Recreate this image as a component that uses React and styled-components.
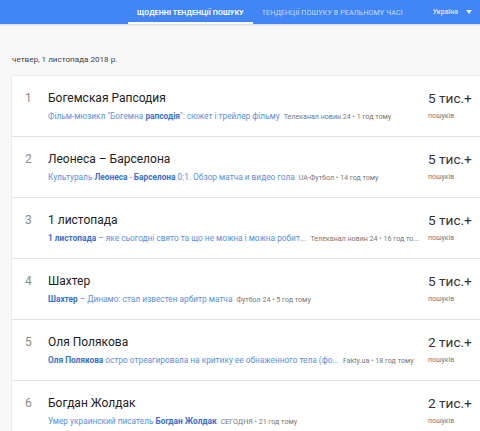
import React from 'react'
import styled, { createGlobalStyle } from 'styled-components'

const Global = createGlobalStyle`
  html, body { margin: 0; padding: 0; background: #f8f8f8; }
  body { font-family: Roboto, "Noto Sans", "Liberation Sans", sans-serif; overflow: hidden; }
`

const Header = styled.header`
  height: 24px;
  background: #4285f4;
  display: flex;
  align-items: stretch;
  justify-content: flex-end;
  padding-right: 8px;
  box-shadow: 0 1px 2px rgba(0, 0, 0, 0.15);
`

const Tab = styled.div`
  display: flex;
  align-items: center;
  padding: 0 9px;
  font-size: 7.1px;
  letter-spacing: 0.1px;
  text-transform: uppercase;
  color: ${p => (p.active ? '#fff' : 'rgba(255,255,255,0.72)')};
  font-weight: ${p => (p.active ? 700 : 400)};
  border-bottom: 2px solid ${p => (p.active ? '#fff' : 'transparent')};
  box-sizing: border-box;
  padding-top: 2px;
`

const Country = styled.div`
  display: flex;
  align-items: center;
  gap: 8px;
  margin-left: 21px;
  font-size: 7px;
  color: rgba(255, 255, 255, 0.85);
  font-weight: 500;
`

const Caret = styled.span`
  width: 0;
  height: 0;
  border-left: 3px solid transparent;
  border-right: 3px solid transparent;
  border-top: 4px solid rgba(255, 255, 255, 0.85);
`

const Main = styled.main`
  padding: 30px 0 0 12px;
`

const DateLine = styled.div`
  font-size: 8.1px;
  color: #444;
  height: 10px;
  line-height: 10px;
  margin-bottom: 12px;
`

const Card = styled.section`
  background: #fff;
  box-shadow: 0 0 2px rgba(0, 0, 0, 0.12), 0 1px 1px rgba(0, 0, 0, 0.06);
`

const Row = styled.div`
  display: flex;
  height: 61px;
  box-sizing: border-box;
  border-bottom: 1px solid #e4e4e4;
  padding-top: 14px;
`

const Index = styled.div`
  width: 36px;
  padding-left: 13px;
  box-sizing: border-box;
  font-size: 12px;
  line-height: 16px;
  color: #8a8a8a;
`

const Body = styled.div`
  flex: 1;
  min-width: 0;
`

const Title = styled.div`
  font-size: 12px;
  line-height: 16px;
  color: #222;
`

const Sub = styled.div`
  margin-top: 5px;
  height: 10px;
  line-height: 10px;
  white-space: nowrap;
  overflow: hidden;
  font-size: 8.3px;
  color: #5b8fe0;
`

const Strong = styled.b`
  font-weight: 700;
  color: #3a6fcf;
`

const Source = styled.span`
  margin-left: 4px;
  font-size: 7.1px;
  color: #777;
`

const Count = styled.div`
  width: 52px;
  flex: none;
`

const Big = styled.div`
  font-size: 13.6px;
  line-height: 16px;
  color: #333;
  white-space: nowrap;
`

const Small = styled.div`
  margin-top: 5px;
  font-size: 6.9px;
  line-height: 10px;
  color: #777;
`

const rows = [
  {
    n: 1,
    title: 'Богемская Рапсодия',
    sub: [['Фільм-мюзикл "Богемна '], ['рапсодія', 1], ['": сюжет і трейлер фільму']],
    src: 'Телеканал новин 24 • 1 год тому',
    count: '5 тис.+',
  },
  {
    n: 2,
    title: 'Леонеса – Барселона',
    sub: [['Культураль '], ['Леонеса', 1], [' - '], ['Барселона', 1], [' 0:1. Обзор матча и видео гола']],
    src: 'UA-Футбол • 14 год тому',
    count: '5 тис.+',
  },
  {
    n: 3,
    title: '1 листопада',
    sub: [['1 листопада', 1], [' – яке сьогодні свято та що не можна і можна робит...']],
    src: 'Телеканал новин 24 • 16 год то...',
    count: '5 тис.+',
  },
  {
    n: 4,
    title: 'Шахтер',
    sub: [['Шахтер', 1], [' – Динамо: стал известен арбитр матча']],
    src: 'Футбол 24 • 5 год тому',
    count: '5 тис.+',
  },
  {
    n: 5,
    title: 'Оля Полякова',
    sub: [['Оля Полякова', 1], [' остро отреагировала на критику ее обнаженного тела (фо...']],
    src: 'Fakty.ua • 18 год тому',
    count: '2 тис.+',
  },
  {
    n: 6,
    title: 'Богдан Жолдак',
    sub: [['Умер украинский писатель '], ['Богдан Жолдак', 1]],
    src: 'СЕГОДНЯ • 21 год тому',
    count: '2 тис.+',
  },
]

export default function App() {
  return (
    <>
      <Global />
      <Header>
        <Tab active>Щоденні тенденції пошуку</Tab>
        <Tab>Тенденції пошуку в реальному часі</Tab>
        <Country>
          Україна <Caret />
        </Country>
      </Header>
      <Main>
        <DateLine>четвер, 1 листопада 2018 р.</DateLine>
        <Card>
          {rows.map(r => (
            <Row key={r.n}>
              <Index>{r.n}</Index>
              <Body>
                <Title>{r.title}</Title>
                <Sub>
                  {r.sub.map(([t, b], i) => (b ? <Strong key={i}>{t}</Strong> : <span key={i}>{t}</span>))}
                  <Source>{r.src}</Source>
                </Sub>
              </Body>
              <Count>
                <Big>{r.count}</Big>
                <Small>пошуків</Small>
              </Count>
            </Row>
          ))}
        </Card>
      </Main>
    </>
  )
}
